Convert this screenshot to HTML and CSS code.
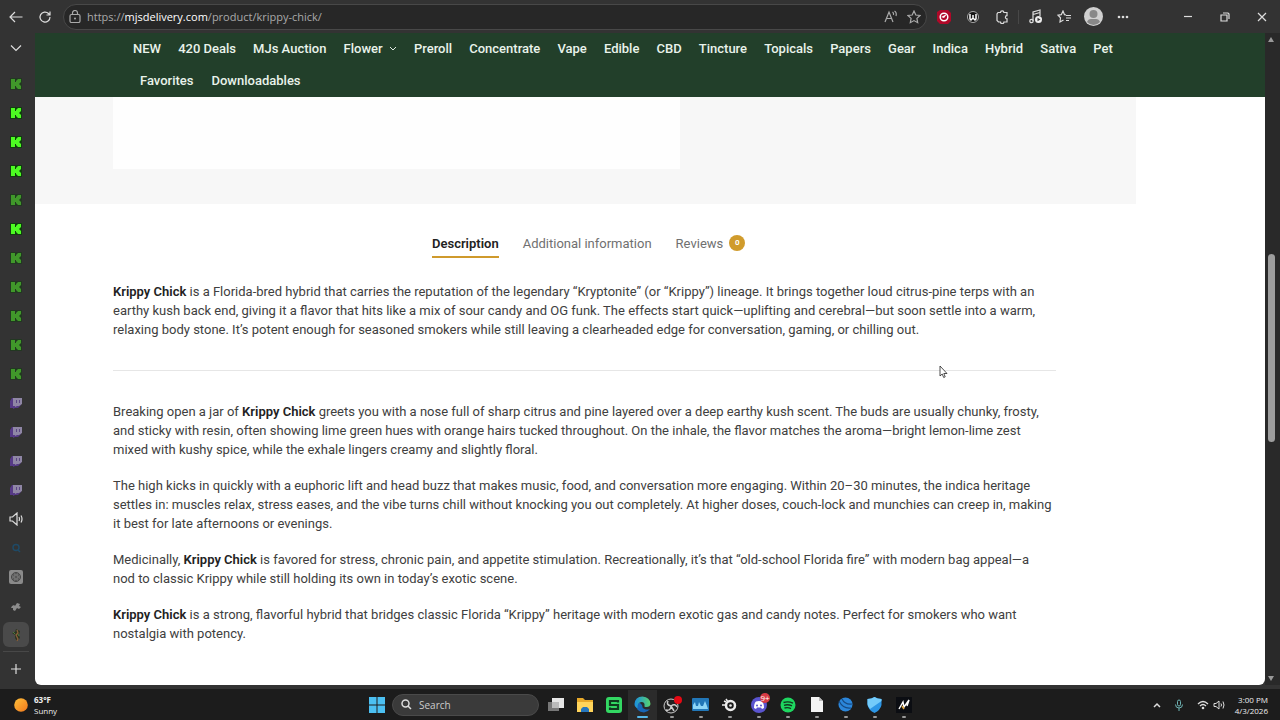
FILE: index.html
```html
<!DOCTYPE html>
<html lang="en">
<head>
    <meta charset="UTF-8">
    <meta name="viewport" content="width=device-width, initial-scale=1.0">
    <title>Krippy Chick</title>
    <link rel="stylesheet" href="styles.css">
</head>
<body>
    <svg class="sprites" aria-hidden="true">
        <symbol id="kick" viewBox="0 0 12 12">
            <path class="kick-edge" d="M0 0h12v12H0z"/>
            <path d="M1 1h4v3h1V3l2-2h3v3L9 6l2 2v3H8L6 9V8H5v3H1z"/>
        </symbol>
        <symbol id="twitch" viewBox="0 0 12 12">
            <path fill="#563a86" d="M2 1L0 4v7h3v1l2-1h3l3-3V1z"/>
            <path fill="#8f86a5" d="M3 1h9v6l-3 2H7l-2 1V9H3z"/>
            <path fill="#5b4685" d="M6 3h1v3H6zM9 3h1v3H9z"/>
        </symbol>
    </svg>

    <header class="toolbar">
        <button class="tool nav-back" aria-label="Back"><svg width="14" height="12" viewBox="0 0 14 12"><path class="line" d="M13.500 6H1M6 1L1 6l5 5"/></svg></button>
        <button class="tool" aria-label="Refresh"><svg width="14" height="14" viewBox="0 0 14 14"><path class="line" d="M12 7a5 5 0 1 1-1.500-3.500L12 5M12 1.500V5H8.500"/></svg></button>
        <div class="address">
            <svg width="12" height="13" viewBox="0 0 12 13"><rect class="line dim" x="1" y="4.500" width="10" height="8" rx="1.500"/><path class="line dim" d="M3.500 4.500V3a2.500 2.500 0 0 1 5 0v1.500"/><circle cx="6" cy="8.500" r="1" fill="#aaa"/></svg>
            <a class="url" href="#">https://<b>mjsdelivery.com</b>/product/krippy-chick/</a>
            <button class="mini" aria-label="Read aloud"><svg width="14" height="14" viewBox="0 0 14 14"><path class="line dim" d="M1 12L5 2l4 10M2.500 8.500h5M8.500 2q1.500 1 1 3M10.500 1q2.500 1.500 1.500 5"/></svg></button>
            <button class="mini" aria-label="Add to favorites"><svg width="14" height="14" viewBox="0 0 14 14"><path class="line dim" d="M7 1l1.800 4 4.200.5-3.100 2.900.8 4.300L7 10.600l-3.700 2.100.8-4.300L1 5.500 5.200 5z"/></svg></button>
        </div>
        <button class="tool" aria-label="Ad blocker"><svg width="14" height="14" viewBox="0 0 14 14"><path fill="#b00828" d="M0 2l3-2h8l3 3v8l-3 3H3l-3-3z"/><circle cx="7" cy="7" r="3.800" fill="none" stroke="#fff" stroke-width="1.500"/><path d="M4 7l6-3-3 4z" fill="#fff"/></svg></button>
        <button class="tool" aria-label="Extension"><svg width="14" height="14" viewBox="0 0 14 14"><circle cx="7" cy="7" r="5.500" fill="#151515" stroke="#aaa"/><path d="M4 4v5l1 1 2-2 2 2 1-1V4M7 5v3" fill="none" stroke="#fff" stroke-width="1.500"/></svg></button>
        <button class="tool" aria-label="Extensions"><svg width="14" height="14" viewBox="0 0 14 14"><path class="line" d="M4 2.500h1.500a1.700 1.700 0 0 1 3.400 0H12v3.200a1.600 1.600 0 0 0 0 3.200V12H8.900a1.700 1.700 0 0 1-3.400 0H3.500L2 10.500V4l1-1.500z"/></svg></button>
        <span class="divider"></span>
        <button class="tool" aria-label="Media"><svg width="15" height="15" viewBox="0 0 15 15"><path class="line" d="M5 12V3l7-2v6M5 5.500L12 3.500"/><circle cx="3.500" cy="12" r="1.700" class="line"/><circle cx="10.500" cy="10.500" r="3.500" fill="#eee"/><path d="M9.500 8.700v3.600l3-1.800z" fill="#333"/></svg></button>
        <button class="tool" aria-label="Favorites"><svg width="15" height="14" viewBox="0 0 15 14"><path class="line" d="M9 5L7.500 4.700 6 1 4.300 4.700 1 5.200l2.500 2.600L3 12l3.500-2M9 5.500h5M9 8h5M9 10.500h3"/></svg></button>
        <button class="tool" aria-label="Profile"><svg width="19" height="19" viewBox="0 0 19 19"><circle cx="9.500" cy="9.500" r="9.500" fill="#d0d0d0"/><circle cx="9.500" cy="7" r="4" fill="#888"/><path d="M3 15q1-3 4-3h5q3 0 4 3-3 3-6.500 3T3 15z" fill="#888"/></svg></button>
        <button class="tool" aria-label="Settings and more"><svg width="12" height="4" viewBox="0 0 12 4"><circle cx="2" cy="2" r="1.300" fill="#ddd"/><circle cx="6" cy="2" r="1.300" fill="#ddd"/><circle cx="10" cy="2" r="1.300" fill="#ddd"/></svg></button>
        <div class="window-buttons">
            <button aria-label="Minimize"><svg width="10" height="10" viewBox="0 0 10 10"><path class="line" d="M1 4.500h8"/></svg></button>
            <button aria-label="Restore"><svg width="10" height="10" viewBox="0 0 10 10"><path class="line" d="M1 3h6v6H1zM3 1h5l1 1v5"/></svg></button>
            <button aria-label="Close"><svg width="10" height="10" viewBox="0 0 10 10"><path class="line" d="M1 1l8 8M9 1L1 9"/></svg></button>
        </div>
    </header>

    <div class="middle">
        <aside class="sidebar">
            <button class="tab-btn collapse" aria-label="Tab actions"><svg width="12" height="8" viewBox="0 0 12 8"><path class="line" d="M1 1.500l5 5 5-5"/></svg></button>
            <button class="tab-btn dimmed" aria-label="Kick tab"><svg class="kick"><use href="#kick"/></svg></button>
            <button class="tab-btn" aria-label="Kick tab"><svg class="kick"><use href="#kick"/></svg></button>
            <button class="tab-btn" aria-label="Kick tab"><svg class="kick"><use href="#kick"/></svg></button>
            <button class="tab-btn" aria-label="Kick tab"><svg class="kick"><use href="#kick"/></svg></button>
            <button class="tab-btn dimmed" aria-label="Kick tab"><svg class="kick"><use href="#kick"/></svg></button>
            <button class="tab-btn" aria-label="Kick tab"><svg class="kick"><use href="#kick"/></svg></button>
            <button class="tab-btn dimmed" aria-label="Kick tab"><svg class="kick"><use href="#kick"/></svg></button>
            <button class="tab-btn dimmed" aria-label="Kick tab"><svg class="kick"><use href="#kick"/></svg></button>
            <button class="tab-btn dimmed" aria-label="Kick tab"><svg class="kick"><use href="#kick"/></svg></button>
            <button class="tab-btn dimmed" aria-label="Kick tab"><svg class="kick"><use href="#kick"/></svg></button>
            <button class="tab-btn dimmed" aria-label="Kick tab"><svg class="kick"><use href="#kick"/></svg></button>
            <button class="tab-btn" aria-label="Twitch tab"><svg class="twitch"><use href="#twitch"/></svg></button>
            <button class="tab-btn" aria-label="Twitch tab"><svg class="twitch"><use href="#twitch"/></svg></button>
            <button class="tab-btn" aria-label="Twitch tab"><svg class="twitch"><use href="#twitch"/></svg></button>
            <button class="tab-btn" aria-label="Twitch tab"><svg class="twitch"><use href="#twitch"/></svg></button>
            <button class="tab-btn" aria-label="Playing tab"><svg width="14" height="14" viewBox="0 0 14 14"><path class="line" d="M1 5v4h2.500L8 13V1L3.500 5zM10 5q1 2 0 4M12 3.500q2 3.500 0 7"/></svg></button>
            <button class="tab-btn" aria-label="Search tab"><svg width="10" height="10" viewBox="0 0 10 10"><circle cx="5" cy="4.500" r="3" fill="none" stroke="#1f4a66" stroke-width="1.500"/><path d="M7 7l2 2" stroke="#1f4a66" stroke-width="1.500"/></svg></button>
            <button class="tab-btn" aria-label="Chat tab"><svg width="14" height="14" viewBox="0 0 14 14"><rect width="14" height="14" rx="2" fill="#8a8a8a"/><circle cx="7" cy="7" r="4.500" fill="none" stroke="#444"/><path d="M4 5l3-2 3 2v4l-3 2-3-2zM4 5l6 4M10 5L4 9M7 3v8" fill="none" stroke="#555"/></svg></button>
            <button class="tab-btn" aria-label="Tab"><svg width="10" height="10" viewBox="0 0 10 10"><path d="M1 5l2-1 1 1 2-3 3 1-1 2 2 1-2 2-2-1-2 3-2-1V7L0 7z" fill="#8c8c8c"/></svg></button>
            <button class="tab-btn current" aria-label="MJs Delivery tab"><svg width="10" height="14" viewBox="0 0 10 14"><path d="M5 1l4 2-1 4 1 3-3 3-2-3V7L1 5l3-1z" fill="#2c3522"/><path d="M6 2l1 3-2 2 2 4-1 2" fill="none" stroke="#8a5f3a" stroke-width="1.300"/><path d="M2 4l2 2M7 6l1 2" stroke="#4f7d3c"/></svg></button>
            <button class="tab-btn new-tab" aria-label="New tab"><svg width="12" height="12" viewBox="0 0 12 12"><path class="line" d="M6 1v10M1 6h10"/></svg></button>
        </aside>

        <main class="page">
            <nav class="menu">
                <ul class="menu-row spread">
                    <li><a href="#">NEW</a></li>
                    <li><a href="#">420 Deals</a></li>
                    <li><a href="#">MJs Auction</a></li>
                    <li><a href="#">Flower <svg width="8" height="6" viewBox="0 0 8 6"><path d="M1 1l3 3 3-3" fill="none" stroke="#dfe8e1"/></svg></a></li>
                    <li><a href="#">Preroll</a></li>
                    <li><a href="#">Concentrate</a></li>
                    <li><a href="#">Vape</a></li>
                    <li><a href="#">Edible</a></li>
                    <li><a href="#">CBD</a></li>
                    <li><a href="#">Tincture</a></li>
                    <li><a href="#">Topicals</a></li>
                    <li><a href="#">Papers</a></li>
                    <li><a href="#">Gear</a></li>
                    <li><a href="#">Indica</a></li>
                    <li><a href="#">Hybrid</a></li>
                    <li><a href="#">Sativa</a></li>
                    <li><a href="#">Pet</a></li>
                </ul>
                <ul class="menu-row second">
                    <li><a href="#">Favorites</a></li>
                    <li><a href="#">Downloadables</a></li>
                </ul>
            </nav>

            <div class="gallery"><div class="photo"></div></div>

            <div class="tabs">
                <a class="active" href="#">Description</a>
                <a href="#">Additional information</a>
                <a href="#">Reviews <span class="count">0</span></a>
            </div>

            <div class="description">
                <p><strong>Krippy Chick</strong> is a Florida-bred hybrid that carries the reputation of the legendary “Kryptonite” (or “Krippy”) lineage. It brings together loud citrus-pine terps with an<br>
                earthy kush back end, giving it a flavor that hits like a mix of sour candy and OG funk. The effects start quick—uplifting and cerebral—but soon settle into a warm,<br>
                relaxing body stone. It’s potent enough for seasoned smokers while still leaving a clearheaded edge for conversation, gaming, or chilling out.</p>
                <hr>
                <p>Breaking open a jar of <strong>Krippy Chick</strong> greets you with a nose full of sharp citrus and pine layered over a deep earthy kush scent. The buds are usually chunky, frosty,<br>
                and sticky with resin, often showing lime green hues with orange hairs tucked throughout. On the inhale, the flavor matches the aroma—bright lemon-lime zest<br>
                mixed with kushy spice, while the exhale lingers creamy and slightly floral.</p>
                <p>The high kicks in quickly with a euphoric lift and head buzz that makes music, food, and conversation more engaging. Within 20–30 minutes, the indica heritage<br>
                settles in: muscles relax, stress eases, and the vibe turns chill without knocking you out completely. At higher doses, couch-lock and munchies can creep in, making<br>
                it best for late afternoons or evenings.</p>
                <p>Medicinally, <strong>Krippy Chick</strong> is favored for stress, chronic pain, and appetite stimulation. Recreationally, it’s that “old-school Florida fire” with modern bag appeal—a<br>
                nod to classic Krippy while still holding its own in today’s exotic scene.</p>
                <p><strong>Krippy Chick</strong> is a strong, flavorful hybrid that bridges classic Florida “Krippy” heritage with modern exotic gas and candy notes. Perfect for smokers who want<br>
                nostalgia with potency.</p>
            </div>
        </main>

        <div class="scrollbar">
            <svg width="6" height="5" viewBox="0 0 6 5"><path d="M3 0l3 5H0z" fill="#999"/></svg>
            <div class="track"><div class="thumb"></div></div>
            <svg width="6" height="5" viewBox="0 0 6 5"><path d="M3 5l3-5H0z" fill="#999"/></svg>
        </div>
    </div>

    <footer class="taskbar">
        <div class="weather">
            <svg width="14" height="14" viewBox="0 0 14 14"><defs><linearGradient id="sun" x2="1" y2="1"><stop stop-color="#ffc13a"/><stop offset="1" stop-color="#f0761c"/></linearGradient></defs><circle cx="7" cy="7" r="6.800" fill="url(#sun)"/></svg>
            <div><b>63°F</b><br>Sunny</div>
        </div>
        <div class="apps">
            <button class="app" aria-label="Start"><svg width="16" height="16" viewBox="0 0 16 16"><path fill="#4cc0f2" d="M0 0h7.500v7.500H0zM8.500 0H16v7.500H8.500zM0 8.500h7.500V16H0zM8.500 8.500H16V16H8.500z"/></svg></button>
            <label class="search">
                <svg width="11" height="11" viewBox="0 0 11 11"><circle cx="4.500" cy="4.500" r="3.500" fill="none" stroke="#ddd" stroke-width="1.500"/><path d="M7 7l3 3" stroke="#ddd" stroke-width="1.500"/></svg>
                <input type="text" placeholder="Search" aria-label="Search">
            </label>
            <button class="app" aria-label="Task view"><svg width="16" height="16" viewBox="0 0 16 16"><path fill="#777" d="M0 5h11v9H0z"/><path fill="#e6e6e6" d="M4 1h12v10H4z"/><path fill="#bbb" d="M4 5h7v6H4z"/></svg></button>
            <button class="app" aria-label="File Explorer"><svg width="18" height="16" viewBox="0 0 18 16"><path fill="#e8a92a" d="M1 1h6l2 2h8v5H1z"/><path fill="#ffd45b" d="M1 5h16v10H1z"/><path fill="#2676bd" d="M5 15v-3l2-2h4l2 2v3z"/></svg></button>
            <button class="app" aria-label="Streaming app"><svg width="16" height="16" viewBox="0 0 16 16"><rect width="16" height="16" rx="3" fill="#33d863"/><path d="M12 5.500V4H4v4h8v4H4v-1.500" fill="none" stroke="#103b20" stroke-width="2.200"/></svg></button>
            <button class="app open focused" aria-label="Edge"><svg width="17" height="17" viewBox="0 0 17 17"><defs><linearGradient id="edge" x2="1" y2="0"><stop stop-color="#1a8fe0"/><stop offset="1" stop-color="#58d46d"/></linearGradient></defs><path fill="#1766b8" d="M1 7q1 9 9 9.500 4-.5 6-3.500-3 1-5.500 0T8 9L4 5z"/><path fill="url(#edge)" d="M.5 8Q1 .8 8.500.5 16 1 16.500 8q-.5 3-4 3-2.500 0-2-1.500Q11 6 7.500 6 3 6 3.500 12 .5 11 .5 8z"/></svg></button>
            <button class="app open" aria-label="OBS Studio"><svg width="20" height="18" viewBox="0 0 20 18"><circle cx="9" cy="10" r="7" fill="#222" stroke="#ccc"/><path d="M9 10q-5-1-3-5M9 10q0 5-5 4M9 10q4-3 6 1M9 10l3 5" fill="none" stroke="#ccc" stroke-width="1.500"/><circle cx="16" cy="4" r="4" fill="#e60914"/></svg></button>
            <button class="app open" aria-label="Monitor"><svg width="17" height="13" viewBox="0 0 17 13"><rect width="17" height="13" rx="1" fill="#2277b8"/><path d="M1 11V7l2-3 1 4h2l1-4 2 4h2l2-5 2 5 1 3z" fill="#8ed6f7"/></svg></button>
            <button class="app open" aria-label="SteelSeries GG"><svg width="15" height="15" viewBox="0 0 15 15"><circle cx="8.500" cy="8.500" r="4.500" fill="none" stroke="#eee" stroke-width="2.500"/><circle cx="8.500" cy="8.500" r="1.300" fill="#eee"/><path d="M0 8h4M4 2l2 3M2 4l2 1" stroke="#eee" stroke-width="1.500"/></svg></button>
            <button class="app open" aria-label="Discord"><svg width="16" height="16" viewBox="0 0 16 16"><circle cx="8" cy="8" r="8" fill="#5a54cf"/><path d="M3 11q0-5 2-6.500 3-1 6 0 2 1.500 2 6.500l-2 1-1-1.500H6L5 12z" fill="#fff"/><circle cx="6" cy="8.500" r="1" fill="#5a54cf"/><circle cx="10" cy="8.500" r="1" fill="#5a54cf"/></svg><span class="badge">9+</span></button>
            <button class="app open" aria-label="Spotify"><svg width="16" height="16" viewBox="0 0 16 16"><circle cx="8" cy="8" r="7.500" fill="#1ed760"/><path d="M3.500 5.500q5-1.500 9.500.7M4 8.300q4-1.200 8 .6M4.500 11q3.500-1 6.500.6" fill="none" stroke="#12381f" stroke-width="1.400"/></svg></button>
            <button class="app open" aria-label="Document"><svg width="12" height="15" viewBox="0 0 12 15"><path fill="#f4f4f4" d="M0 0h8l4 4v11H0z"/><path fill="#bbb" d="M8 0v4h4z"/></svg></button>
            <button class="app open" aria-label="Sphere app"><svg width="15" height="15" viewBox="0 0 15 15"><circle cx="7.500" cy="7.500" r="7" fill="#2b86da"/><path d="M1 4q4 8 12 7M4 2q3 6 10 5" fill="none" stroke="#174a82" stroke-width="1.200"/></svg></button>
            <button class="app open" aria-label="Security"><svg width="15" height="16" viewBox="0 0 15 16"><path fill="#2c96e6" d="M7.500 0q3 2 7 2v6q-1 5-7 8-6-3-7-8V2q4 0 7-2z"/><path fill="#73cbfa" d="M7.500 0q3 2 7 2v2L3 12Q.5 9 .5 7V2q4 0 7-2z"/></svg></button>
            <button class="app open" aria-label="Lightning app"><svg width="16" height="16" viewBox="0 0 16 16"><path fill="#0b0d12" d="M0 0h16v16H0z"/><path d="M3 12l4-7 1 5 5-7-2 6" fill="none" stroke="#fff" stroke-width="1.400"/><path d="M6 9l2 3" stroke="#e5a93d" stroke-width="1.500"/></svg></button>
        </div>
        <div class="tray">
            <svg width="8" height="6" viewBox="0 0 8 6"><path d="M1 5l3-3 3 3" fill="none" stroke="#ddd" stroke-width="1.500"/></svg>
            <svg width="8" height="12" viewBox="0 0 8 12"><rect x="2.500" y="1" width="3" height="6" rx="1.500" fill="none" stroke="#6fb5b5"/><path d="M.5 5.500q0 3.500 3.500 3.500t3.500-3.500M4 9v3" fill="none" stroke="#6fb5b5"/></svg>
            <div class="sound">
                <svg width="12" height="10" viewBox="0 0 12 10"><path d="M1 4q5-5 10 0M3 6q3-3 6 0" fill="none" stroke="#ddd" stroke-width="1.300"/><circle cx="6" cy="8" r="1.300" fill="#ddd"/></svg>
                <svg width="12" height="10" viewBox="0 0 12 10"><path d="M1 3.500v3h2L6 9V1L3 3.500zM8 3.500q1 1.500 0 3M10 1.500q2 3.500 0 7" fill="none" stroke="#ddd"/></svg>
            </div>
            <div class="clock">3:00 PM<br>4/3/2026</div>
        </div>
    </footer>

    <svg class="cursor" width="9" height="14" viewBox="0 0 9 14"><path d="M1 1v10l2.200-2 1.500 3.500 1.500-.7L4.800 8.500H8z" fill="#fff" stroke="#222" stroke-width=".8"/></svg>
</body>
</html>
```
FILE: styles.css
```css
* {
    box-sizing: border-box;
}

body {
    margin: 0;
    height: 100vh;
    display: flex;
    flex-direction: column;
    overflow: hidden;
    background-color: #333;
    color: #404040;
    font-family: Roboto, sans-serif;
    font-size: 13px;
}

button {
    display: flex;
    align-items: center;
    justify-content: center;
    padding: 0;
    border: none;
    background: none;
    font-family: inherit;
}

a {
    color: inherit;
    text-decoration: none;
}

svg {
    flex: none;
}

.sprites {
    display: none;
}

.line {
    fill: none;
    stroke: #ddd;
    stroke-width: 1.2;
}

.dim {
    stroke: #aaa;
}

/* browser toolbar */
.toolbar {
    display: flex;
    align-items: center;
    height: 33px;
    flex: none;
}

.tool {
    width: 29px;
    height: 32px;
}

.nav-back {
    margin-left: 1px;
}

.address {
    flex: 1;
    display: flex;
    align-items: center;
    height: 26px;
    margin: 0 2px 0 4px;
    padding: 0 1px 0 5px;
    border: 1px solid #484848;
    border-radius: 13px;
    background-color: #272727;
    color: #aaa;
}

.url {
    flex: 1;
    margin-left: 6px;
    font-family: "Open Sans", sans-serif;
    font-size: 11px;
}

.url b {
    font-weight: normal;
    color: #fff;
}

.mini {
    width: 23px;
}

.divider {
    width: 1px;
    height: 14px;
    margin: 0 2px;
    background-color: #484848;
}

.window-buttons {
    display: flex;
    margin-left: 32px;
}

.window-buttons button {
    width: 37px;
    height: 32px;
}

.middle {
    flex: 1;
    display: flex;
    min-height: 0;
    padding-bottom: 4px;
}

/* vertical tabs */
.sidebar {
    width: 35px;
    flex: none;
    padding-left: 3px;
}

.tab-btn {
    width: 26px;
    height: 25px;
    margin-bottom: 4px;
    border-radius: 6px;
}

.collapse {
    height: 30px;
    margin-bottom: 8px;
}

.kick,
.twitch {
    width: 12px;
    height: 12px;
    fill: #4dfc22;
}

.kick-edge {
    fill: #123d10;
}

.dimmed svg {
    opacity: 0.5;
}

.current {
    background-color: #4a4a4a;
}

.new-tab {
    height: 34px;
    border-top: 1px solid #484848;
    border-radius: 0;
}

/* shop page */
.page {
    flex: 1;
    min-width: 0;
    overflow: hidden;
    background-color: #fff;
    border-radius: 0 0 6px 6px;
}

.menu {
    height: 64px;
    padding: 0 152px 0 98px;
    background-color: #223f2a;
    color: #e9f3eb;
    font-weight: 500;
}

.menu-row {
    display: flex;
    gap: 18px;
    margin: 0;
    padding: 0;
    list-style: none;
    line-height: 32px;
    white-space: nowrap;
}

.spread {
    gap: 0;
    justify-content: space-between;
}

.second {
    padding-left: 7px;
}

.menu svg {
    margin: 0 0 1px 3px;
}

.gallery {
    height: 107px;
    margin-right: 129px;
    padding-left: 78px;
    background-color: #f7f7f7;
}

.photo {
    width: 55.4%;
    height: 72px;
    background-color: #fefefe;
}

.tabs {
    display: flex;
    gap: 24px;
    padding: 26px 0 0 397px;
    color: #707070;
}

.tabs a {
    display: flex;
    align-items: center;
    gap: 6px;
    height: 28px;
    padding-bottom: 2px;
}

.tabs .active {
    border-bottom: 2px solid #cf9a2c;
    padding-bottom: 0;
    color: #222;
    font-weight: 600;
}

.count {
    width: 16px;
    height: 16px;
    border-radius: 8px;
    background-color: #d09b2c;
    color: #fff;
    font-size: 8px;
    font-weight: bold;
    line-height: 16px;
    text-align: center;
}

.description {
    margin: 24px 209px 0 78px;
    line-height: 19px;
    white-space: nowrap;
}

.description p {
    margin: 0 0 17px;
}

.description strong {
    color: #222;
    font-weight: 600;
}

.description hr {
    height: 1px;
    margin: 31px 0;
    border: none;
    background-color: #e6e6e6;
}

.scrollbar {
    width: 15px;
    flex: none;
    display: flex;
    flex-direction: column;
    align-items: center;
    padding: 4px 3px 4px 0;
    background-color: #292929;
}

.track {
    flex: 1;
    padding-top: 212px;
}

.thumb {
    width: 7px;
    height: 188px;
    border-radius: 4px;
    background-color: #9d9d9d;
}

/* windows taskbar */
.taskbar {
    display: flex;
    align-items: center;
    justify-content: space-between;
    height: 31px;
    flex: none;
    background-color: #1c1c1c;
    color: #eee;
    font-family: "Open Sans", sans-serif;
    font-size: 8px;
    line-height: 11px;
}

.weather {
    flex: 1;
    display: flex;
    align-items: center;
    gap: 6px;
    padding-left: 14px;
}

.apps {
    display: flex;
    align-items: center;
    padding-right: 2px;
}

.app {
    position: relative;
    width: 29px;
    height: 30px;
}

.open::after {
    content: "";
    position: absolute;
    bottom: 2px;
    left: 13px;
    width: 4px;
    height: 2px;
    border-radius: 1px;
    background-color: #999;
}

.focused {
    background-color: #2b2b2b;
}

.focused::after {
    left: 9px;
    width: 11px;
    background-color: #55b8ec;
}

.badge {
    position: absolute;
    top: 3px;
    right: 3px;
    width: 10px;
    height: 10px;
    border-radius: 5px;
    background-color: #d83b45;
    color: #fff;
    font-size: 8px;
    line-height: 10px;
}

.search {
    display: flex;
    align-items: center;
    gap: 7px;
    width: 147px;
    height: 22px;
    margin: 0 2px 0 1px;
    padding-left: 8px;
    border: 1px solid #4a4a4a;
    border-radius: 11px;
    background-color: #3a3a3a;
}

.search input {
    width: 100px;
    padding: 0;
    border: none;
    outline: none;
    background: none;
    color: #ddd;
    font-family: inherit;
    font-size: 10px;
}

.search input::placeholder {
    color: #ccc;
}

.tray {
    flex: 1;
    display: flex;
    align-items: center;
    justify-content: flex-end;
    gap: 14px;
    padding-right: 12px;
}

.sound {
    display: flex;
    gap: 4px;
}

.clock {
    margin-left: -4px;
    text-align: right;
}

.cursor {
    position: absolute;
    left: 939px;
    top: 365px;
}
```
